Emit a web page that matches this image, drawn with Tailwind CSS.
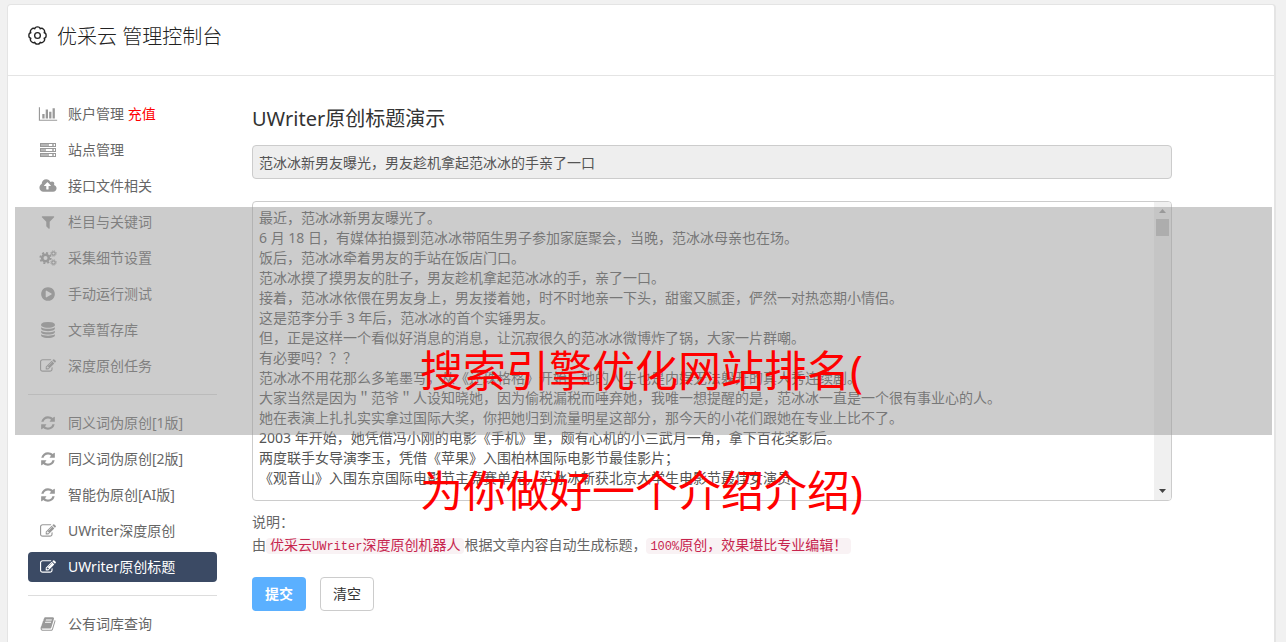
<!DOCTYPE html>
<html lang="zh-CN">
<head>
    <meta charset="UTF-8">
    <meta name="viewport" content="width=device-width, initial-scale=1.0">
    <title>优采云 管理控制台</title>
    <script src="https://cdn.jsdelivr.net/npm/@tailwindcss/browser@4"></script>
</head>
<body class="relative min-h-screen overflow-hidden bg-[#f1f1f1] pt-1 pl-[7px] pr-[10px] text-sm text-[#666] font-['Noto_Sans','Noto_Sans_CJK_SC',sans-serif]">

    <!-- iconos -->
    <svg class="hidden" aria-hidden="true">
        <symbol id="i-chart" viewBox="0 0 2048 1792"><path d="M640 896v512h-256v-512h256zm384-512v1024h-256v-1024h256zm1024 1152v128h-2048v-1536h128v1408h1920zm-640-896v768h-256v-768h256zm384-384v1152h-256v-1152h256z"/></symbol>
        <symbol id="i-server" viewBox="0 0 18 16"><g fill="none" stroke="currentColor"><rect x="1.5" y="1.5" width="15" height="3"/><rect x="1.5" y="6.500" width="15" height="3"/><rect x="1.5" y="11.500" width="15" height="3"/></g><path d="M2 2h8v2H2zM2 7h5v2H2zM2 12h8v2H2zM13 2h2v2h-2zM13 7h2v2h-2zM13 12h2v2h-2z" opacity=".7"/></symbol>
        <symbol id="i-cloud" viewBox="0 0 2048 1792"><path d="M1344 864q0-14-9-23l-352-352q-9-9-23-9t-23 9l-351 351q-10 12-10 24 0 14 9 23t23 9h224v352q0 13 9.500 22.500t22.500 9.500h192q13 0 22.500-9.500t9.500-22.500v-352h224q13 0 22.500-9.500t9.500-22.500zm640 288q0 159-112.500 271.500t-271.500 112.500h-1088q-185 0-316.500-131.500t-131.500-316.500q0-130 70-240t188-165q-2-30-2-43 0-212 150-362t362-150q156 0 285.500 87t188.500 231q71-62 166-62 106 0 181 75t75 181q0 76-41 138 130 31 213.500 135.500t83.500 238.500z"/></symbol>
        <symbol id="i-filter" viewBox="0 0 1792 1792"><path d="M1595 295q17 41-14 70l-493 493v742q0 42-39 59-13 5-25 5-27 0-45-19l-256-256q-19-19-19-45v-486l-493-493q-31-29-14-70 17-39 59-39h1280q42 0 59 39z"/></symbol>
        <symbol id="i-cogs" viewBox="0 0 18 16"><g fill="none" stroke="currentColor"><circle cx="6.500" cy="8" r="3.300" stroke-width="2.600"/><circle cx="6.500" cy="8" r="5.200" stroke-width="1.800" stroke-dasharray="2.040 2.040"/><circle cx="14.500" cy="3.500" r="1.700" stroke-width="1.200"/><circle cx="14.500" cy="3.500" r="2.700" stroke-width="1" stroke-dasharray="1.060 1.060"/><circle cx="14.500" cy="12.500" r="1.700" stroke-width="1.200"/><circle cx="14.500" cy="12.500" r="2.700" stroke-width="1" stroke-dasharray="1.060 1.060"/></g></symbol>
        <symbol id="i-play" viewBox="0 0 1792 1792"><path d="M896 128q209 0 385.500 103t279.500 279.500 103 385.500-103 385.500-279.500 279.500-385.500 103-385.500-103-279.500-279.500-103-385.500 103-385.500 279.500-279.500 385.500-103zm384 823q32-18 32-55t-32-55l-544-320q-31-19-64-1-32 19-32 56v640q0 37 32 56 16 8 32 8 17 0 32-9z"/></symbol>
        <symbol id="i-db" viewBox="0 0 1792 1792"><path d="M896 768q237 0 443-43t325-127v170q0 69-103 128t-280 93.500-385 34.500-385-34.500-280-93.500-103-128v-170q119 84 325 127t443 43zm0 768q237 0 443-43t325-127v170q0 69-103 128t-280 93.500-385 34.500-385-34.500-280-93.500-103-128v-170q119 84 325 127t443 43zm0-384q237 0 443-43t325-127v170q0 69-103 128t-280 93.500-385 34.500-385-34.500-280-93.500-103-128v-170q119 84 325 127t443 43zm0-1152q208 0 385 34.500t280 93.500 103 128v128q0 69-103 128t-280 93.500-385 34.500-385-34.500-280-93.500-103-128v-128q0-69 103-128t280-93.500 385-34.500z"/></symbol>
        <symbol id="i-edit" viewBox="0 0 1792 1792"><path d="M888 1184l116-116-152-152-116 116v56h96v96h56zm440-720q-16-16-33 1l-350 350q-17 17-1 33t33-1l350-350q17-17 1-33zm80 594v190q0 119-84.500 203.500t-203.500 84.500h-832q-119 0-203.500-84.500t-84.500-203.500v-832q0-119 84.500-203.500t203.500-84.500h832q63 0 117 25 15 7 18 23 3 17-9 29l-49 49q-14 14-32 8-23-6-45-6h-832q-66 0-113 47t-47 113v832q0 66 47 113t113 47h832q66 0 113-47t47-113v-126q0-13 9-22l64-64q15-15 35-7t20 29zm-96-738l288 288-672 672h-288v-288zm444 132l-92 92-288-288 92-92q28-28 68-28t68 28l152 152q28 28 28 68t-28 68z"/></symbol>
        <symbol id="i-refresh" viewBox="0 0 1792 1792"><path d="M1639 1056q0 5-1 7-64 268-268 434.500t-478 166.500q-146 0-282.500-55t-243.500-157l-129 129q-19 19-45 19t-45-19-19-45v-448q0-26 19-45t45-19h448q26 0 45 19t19 45-19 45l-137 137q71 66 161 102t187 36q134 0 250-65t186-179q11-17 53-117 8-23 30-23h192q13 0 22.500 9.500t9.500 22.500zm25-800v448q0 26-19 45t-45 19h-448q-26 0-45-19t-19-45 19-45l138-138q-148-137-349-137-134 0-250 65t-186 179q-11 17-53 117-8 23-30 23h-199q-13 0-22.500-9.500t-9.500-22.500v-7q65-268 270-434.500t480-166.500q146 0 284 55.500t245 156.500l130-129q19-19 45-19t45 19 19 45z"/></symbol>
        <symbol id="i-book" viewBox="0 0 1792 1792"><path d="M1703 478q40 57 18 129l-275 906q-19 64-76.500 107.500t-122.500 43.500h-923q-77 0-148.500-53.500t-99.500-131.500q-24-67-2-127 0-4 3-27t4-37q1-8-3-21.500t-3-19.500q2-11 8-21t16.500-23.500 16.500-23.500q23-38 45-91.500t30-91.500q3-10 .5-30t-.5-28q3-11 17-28t17-23q21-36 42-92t25-90q1-9-2.500-32t.5-28q4-13 22-30.500t22-22.500q19-26 42.500-84.500t27.500-96.500q1-8-3-25.500t-2-26.500q2-8 9-18t18-23 17-21q8-12 16.500-30.500t15-35 16-36 19.500-32 26.500-23.500 36-11.500 47.500 5.500l-1 3q38-9 51-9h761q74 0 114 56t18 130l-274 906q-36 119-71.500 153.500t-128.500 34.500h-869q-27 0-38 15-11 16-1 43 24 70 144 70h923q29 0 56-15.500t35-41.500l300-987q7-22 5-57 38 15 59 43zm-1064 2q-4 13 2 22.500t20 9.500h608q13 0 25.500-9.500t16.500-22.500l21-64q4-13-2-22.500t-20-9.500h-608q-13 0-25.500 9.500t-16.500 22.500zm-83 256q-4 13 2 22.500t20 9.500h608q13 0 25.500-9.500t16.500-22.500l21-64q4-13-2-22.500t-20-9.500h-608q-13 0-25.500 9.500t-16.500 22.500z"/></symbol>
    </svg>

    <div class="min-h-[calc(100vh-4px)] rounded-t border border-r-2 border-b-0 border-[#e4e4e4] bg-white">
        <header class="flex h-[71px] items-start gap-[10px] border-b border-[#e4e4e4] pt-4 pl-5 text-[#222]">
            <svg class="mt-[5px] h-[19px] w-[19px]" viewBox="0 0 20 20" fill="none" stroke="currentColor" stroke-width="1.400" stroke-linejoin="round" aria-hidden="true">
                <path d="M17 7.100C19.800 7.400 19.800 12.600 17 12.900C18.800 15.100 15.100 18.800 12.900 17C12.600 19.800 7.400 19.800 7.100 17C4.900 18.800 1.200 15.100 3 12.900C.2 12.600 .2 7.400 3 7.100C1.200 4.900 4.900 1.200 7.100 3C7.400 .2 12.600 .2 12.900 3C15.100 1.200 18.800 4.900 17 7.100z"/>
                <circle cx="10" cy="10" r="3"/>
            </svg>
            <h1 class="text-xl leading-8 font-light">优采云 管理控制台</h1>
        </header>

        <div class="flex pt-[23px] pl-5">
            <!-- menú lateral -->
            <nav class="w-[189px] shrink-0 leading-[30px]">
                <ul class="space-y-[6px]">
                    <li class="flex h-[30px] items-center gap-[10px] pl-[10px]">
                        <svg class="h-4 w-5 fill-[#999] text-[#999]"><use href="#i-chart"/></svg>
                        <span><a href="#">账户管理</a> <a href="#" class="text-[#f00]">充值</a></span>
                    </li>
                    <li><a href="#" class="flex h-[30px] items-center gap-[10px] pl-[10px]"><svg class="h-4 w-5 fill-[#999] text-[#999]"><use href="#i-server"/></svg>站点管理</a></li>
                    <li><a href="#" class="flex h-[30px] items-center gap-[10px] pl-[10px]"><svg class="h-4 w-5 fill-[#999] text-[#999]"><use href="#i-cloud"/></svg>接口文件相关</a></li>
                    <li><a href="#" class="flex h-[30px] items-center gap-[10px] pl-[10px]"><svg class="h-4 w-5 fill-[#999] text-[#999]"><use href="#i-filter"/></svg>栏目与关键词</a></li>
                    <li><a href="#" class="flex h-[30px] items-center gap-[10px] pl-[10px]"><svg class="h-4 w-5 fill-[#999] text-[#999]"><use href="#i-cogs"/></svg>采集细节设置</a></li>
                    <li><a href="#" class="flex h-[30px] items-center gap-[10px] pl-[10px]"><svg class="h-4 w-5 fill-[#999] text-[#999]"><use href="#i-play"/></svg>手动运行测试</a></li>
                    <li><a href="#" class="flex h-[30px] items-center gap-[10px] pl-[10px]"><svg class="h-4 w-5 fill-[#999] text-[#999]"><use href="#i-db"/></svg>文章暂存库</a></li>
                    <li><a href="#" class="flex h-[30px] items-center gap-[10px] pl-[10px]"><svg class="h-4 w-5 fill-[#999] text-[#999]"><use href="#i-edit"/></svg>深度原创任务</a></li>
                </ul>
                <hr class="my-[13px] border-[#ddd]">
                <ul class="space-y-[6px]">
                    <li><a href="#" class="flex h-[30px] items-center gap-[10px] pl-[10px]"><svg class="h-4 w-5 fill-[#999] text-[#999]"><use href="#i-refresh"/></svg>同义词伪原创[1版]</a></li>
                    <li><a href="#" class="flex h-[30px] items-center gap-[10px] pl-[10px]"><svg class="h-4 w-5 fill-[#999] text-[#999]"><use href="#i-refresh"/></svg>同义词伪原创[2版]</a></li>
                    <li><a href="#" class="flex h-[30px] items-center gap-[10px] pl-[10px]"><svg class="h-4 w-5 fill-[#999] text-[#999]"><use href="#i-refresh"/></svg>智能伪原创[AI版]</a></li>
                    <li><a href="#" class="flex h-[30px] items-center gap-[10px] pl-[10px]"><svg class="h-4 w-5 fill-[#999] text-[#999]"><use href="#i-edit"/></svg>UWriter深度原创</a></li>
                    <li><a href="#" class="flex h-[30px] items-center gap-[10px] rounded bg-[#3b4a64] pl-[10px] text-white"><svg class="h-4 w-5 fill-white"><use href="#i-edit"/></svg>UWriter原创标题</a></li>
                </ul>
                <hr class="my-[13px] border-[#ddd]">
                <ul>
                    <li><a href="#" class="flex h-[30px] items-center gap-[10px] pl-[10px]"><svg class="h-4 w-5 fill-[#999] text-[#999]"><use href="#i-book"/></svg>公有词库查询</a></li>
                </ul>
            </nav>

            <main class="mr-[102px] ml-[35px] min-w-0 flex-1">
                <form>
                    <label for="title" class="block pt-1 text-xl leading-8 text-[#333]">UWriter原创标题演示</label>
                    <input id="title" type="text" readonly value="范冰冰新男友曝光，男友趁机拿起范冰冰的手亲了一口" class="mt-[10px] block h-[34px] w-full rounded border border-[#ccc] bg-[#eee] px-[6px] text-[#555] outline-none">

                    <div class="mt-[22px] flex h-[300px] overflow-hidden rounded border border-[#ccc]">
                        <textarea id="content" aria-label="文章内容" class="h-full min-w-0 flex-1 resize-none overflow-hidden px-[6px] py-[6px] leading-5 text-[#555] outline-none">最近，范冰冰新男友曝光了。
6 月 18 日，有媒体拍摄到范冰冰带陌生男子参加家庭聚会，当晚，范冰冰母亲也在场。
饭后，范冰冰牵着男友的手站在饭店门口。
范冰冰摸了摸男友的肚子，男友趁机拿起范冰冰的手，亲了一口。
接着，范冰冰依偎在男友身上，男友搂着她，时不时地亲一下头，甜蜜又腻歪，俨然一对热恋期小情侣。
这是范李分手 3 年后，范冰冰的首个实锤男友。
但，正是这样一个看似好消息的消息，让沉寂很久的范冰冰微博炸了锅，大家一片群嘲。
有必要吗？？？
范冰冰不用花那么多笔墨写，从《还珠格格》开始，她的人生也是内娱无法躲开的真人秀连续剧。
大家当然是因为＂范爷＂人设知晓她，因为偷税漏税而唾弃她，我唯一想提醒的是，范冰冰一直是一个很有事业心的人。
她在表演上扎扎实实拿过国际大奖，你把她归到流量明星这部分，那今天的小花们跟她在专业上比不了。
2003 年开始，她凭借冯小刚的电影《手机》里，颇有心机的小三武月一角，拿下百花奖影后。
两度联手女导演李玉，凭借《苹果》入围柏林国际电影节最佳影片；
《观音山》入围东京国际电影节主竞赛单元，范冰冰斩获北京大学生电影节最佳女演员</textarea>
                        <div class="flex w-[17px] flex-col items-center bg-[#f0f0f0] py-[7px]" aria-hidden="true">
                            <svg class="h-1 w-[7px] fill-[#999]" viewBox="0 0 7 4"><path d="M0 4L3.500 0 7 4z"/></svg>
                            <div class="mt-[6px] h-[17px] w-[13px] bg-[#c1c1c1]"></div>
                            <svg class="mt-auto h-1 w-[7px] fill-[#444]" viewBox="0 0 7 4"><path d="M0 0h7L3.500 4z"/></svg>
                        </div>
                    </div>

                    <div class="mt-[9px] leading-[23px]">
                        <p>说明：</p>
                        <p>由<code class="rounded bg-[#f9f2f4] px-1 font-['Liberation_Mono','Noto_Sans_CJK_SC',monospace] text-[#c7254e]">优采云<span class="text-xs">UWriter</span>深度原创机器人</code>根据文章内容自动生成标题，<code class="rounded bg-[#f9f2f4] px-1 font-['Liberation_Mono','Noto_Sans_CJK_SC',monospace] text-[#c7254e]"><span class="text-xs">100%</span>原创，效果堪比专业编辑！</code></p>
                    </div>

                    <div class="mt-[19px] flex gap-[14px]">
                        <button type="submit" class="h-[34px] w-[54px] rounded bg-[#5bb0ff] font-bold text-white">提交</button>
                        <button type="reset" class="h-[34px] w-[54px] rounded border border-[#ccc] bg-white text-[#333]">清空</button>
                    </div>
                </form>
            </main>
        </div>
    </div>

    <!-- banda gris y título superpuesto -->
    <div class="pointer-events-none absolute top-[207px] right-[14px] left-[15px] h-[228px] bg-[#999]/50"></div>
    <div class="pointer-events-none absolute inset-x-0 top-[311px] pr-[3px] text-center text-[43px] leading-[120px] text-[#f00]">
        <p>搜索引擎优化网站排名(</p>
        <p>为你做好一个介绍介绍)</p>
    </div>
</body>
</html>
